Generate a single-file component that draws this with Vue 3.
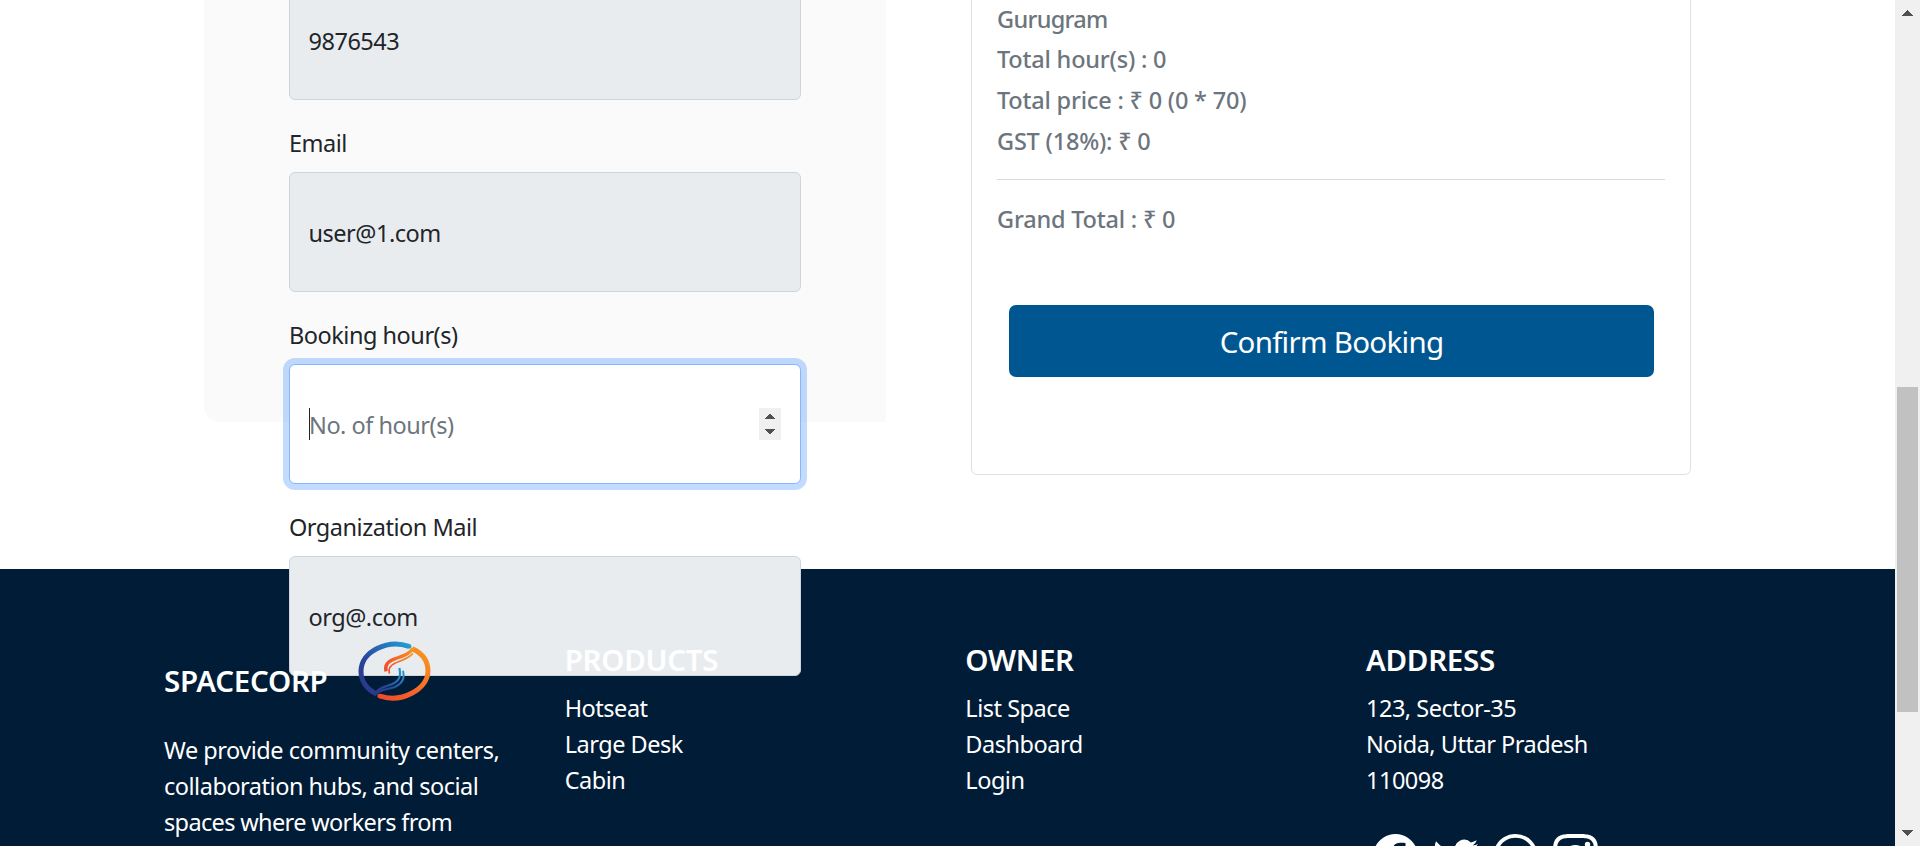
<script setup>
const fields = [
  { label: 'Email', value: 'user@1.com' },
  { label: 'Booking hour(s)', placeholder: 'No. of hour(s)', focused: true },
  { label: 'Organization Mail', value: 'org@.com' },
]

const summary = ['Gurugram', 'Total hour(s) : 0', 'Total price : ₹ 0 (0 * 70)', 'GST (18%): ₹ 0']

const columns = [
  { title: 'PRODUCTS', items: ['Hotseat', 'Large Desk', 'Cabin'] },
  { title: 'OWNER', items: ['List Space', 'Dashboard', 'Login'] },
  { title: 'ADDRESS', items: ['123, Sector-35', 'Noida, Uttar Pradesh', '110098'], social: true },
]

const icons = [
  'M16 8.049c0-4.446-3.582-8.05-8-8.05C3.58 0-.002 3.603-.002 8.05c0 4.017 2.926 7.347 6.75 7.951v-5.625h-2.03V8.05H6.75V6.275c0-2.017 1.195-3.131 3.022-3.131.876 0 1.791.157 1.791.157v1.98h-1.009c-.993 0-1.303.621-1.303 1.258v1.51h2.218l-.354 2.326H9.25V16c3.824-.604 6.75-3.934 6.75-7.951z',
  'M5.026 15c6.038 0 9.341-5.003 9.341-9.334 0-.14 0-.282-.006-.422A6.685 6.685 0 0 0 16 3.542a6.658 6.658 0 0 1-1.889.518 3.301 3.301 0 0 0 1.447-1.817 6.533 6.533 0 0 1-2.087.793A3.286 3.286 0 0 0 7.875 6.03a9.325 9.325 0 0 1-6.767-3.429 3.289 3.289 0 0 0 1.018 4.382A3.323 3.323 0 0 1 .64 6.575v.045a3.288 3.288 0 0 0 2.632 3.218 3.203 3.203 0 0 1-.865.115 3.23 3.23 0 0 1-.614-.057 3.283 3.283 0 0 0 3.067 2.277A6.588 6.588 0 0 1 .78 13.58a6.32 6.32 0 0 1-.78-.045A9.344 9.344 0 0 0 5.026 15z',
  'M13.601 2.326A7.854 7.854 0 0 0 7.994 0C3.627 0 .068 3.558.064 7.926c0 1.399.366 2.76 1.057 3.965L0 16l4.204-1.102a7.933 7.933 0 0 0 3.79.965h.004c4.368 0 7.926-3.558 7.93-7.93A7.898 7.898 0 0 0 13.6 2.326zM7.994 14.521a6.573 6.573 0 0 1-3.356-.92l-.24-.144-2.494.654.666-2.433-.156-.251a6.56 6.56 0 0 1-1.007-3.505c0-3.626 2.957-6.584 6.591-6.584a6.56 6.56 0 0 1 4.66 1.931 6.557 6.557 0 0 1 1.928 4.66c-.004 3.639-2.961 6.592-6.592 6.592z',
  'M8 0C5.829 0 5.556.01 4.703.048 3.85.088 3.269.222 2.76.42a3.917 3.917 0 0 0-1.417.923A3.927 3.927 0 0 0 .42 2.76C.222 3.268.087 3.85.048 4.7.01 5.555 0 5.827 0 8.001c0 2.172.01 2.444.048 3.297.04.852.174 1.433.372 1.942.205.526.478.972.923 1.417.444.445.89.719 1.416.923.51.198 1.09.333 1.942.372C5.555 15.99 5.827 16 8 16s2.444-.01 3.298-.048c.851-.04 1.434-.174 1.943-.372a3.916 3.916 0 0 0 1.416-.923c.445-.445.718-.891.923-1.417.197-.509.332-1.09.372-1.942C15.99 10.445 16 10.173 16 8s-.01-2.445-.048-3.299c-.04-.851-.175-1.433-.372-1.941a3.926 3.926 0 0 0-.923-1.417A3.911 3.911 0 0 0 13.24.42c-.51-.198-1.092-.333-1.943-.372C10.443.01 10.172 0 7.998 0h.003zm-.717 1.442h.718c2.136 0 2.389.007 3.232.046.78.035 1.204.166 1.486.275.373.145.64.319.92.599.28.28.453.546.598.92.11.281.24.705.275 1.485.039.843.047 1.096.047 3.231s-.008 2.389-.047 3.232c-.035.78-.166 1.203-.275 1.485a2.47 2.47 0 0 1-.599.919c-.28.28-.546.453-.92.598-.28.11-.704.24-1.485.276-.843.038-1.096.047-3.232.047s-2.39-.009-3.233-.047c-.78-.036-1.203-.166-1.485-.276a2.478 2.478 0 0 1-.92-.598 2.48 2.48 0 0 1-.6-.92c-.109-.281-.24-.705-.275-1.485-.038-.843-.046-1.096-.046-3.233 0-2.136.008-2.388.046-3.231.036-.78.166-1.204.276-1.486.145-.373.319-.64.599-.92.28-.28.546-.453.92-.598.282-.11.705-.24 1.485-.276.738-.034 1.024-.044 2.515-.045v.002zm4.988 1.328a.96.96 0 1 0 0 1.92.96.96 0 0 0 0-1.92zM8 3.892a4.109 4.109 0 1 0 0 8.217 4.109 4.109 0 0 0 0-8.217zm0 1.441a2.667 2.667 0 1 1 0 5.334 2.667 2.667 0 0 1 0-5.334z',
]
</script>

<template>
  <div class="window">
    <div class="page">
      <main class="booking">
        <form class="panel" @submit.prevent>
          <div class="control">9876543</div>
          <div v-for="f in fields" :key="f.label" class="field">
            <label>{{ f.label }}</label>
            <div class="control" :class="{ focused: f.focused }">
              <template v-if="f.focused">
                <span class="hint">{{ f.placeholder }}</span>
                <svg class="spinner" viewBox="0 0 22 32">
                  <path d="M6 11h10v-1h-1v-1h-1v-1h-1v-1h-1v-1h-2v1h-1v1h-1v1h-1v1h-1zM6 21h10v1h-1v1h-1v1h-1v1h-1v1h-2v-1h-1v-1h-1v-1h-1v-1h-1z" />
                </svg>
              </template>
              <template v-else>{{ f.value }}</template>
            </div>
          </div>
        </form>

        <section class="card">
          <p v-for="line in summary" :key="line">{{ line }}</p>
          <hr />
          <p class="grand">Grand Total : ₹ 0</p>
          <button type="button">Confirm Booking</button>
        </section>
      </main>

      <footer class="footer">
        <div class="cols">
          <div class="col about">
            <div class="brand">
              <h5>SPACECORP</h5>
              <svg class="logo" viewBox="50 30 230 190" fill="none">
                <defs>
                  <linearGradient id="cool" x1="0" y1="1" x2="1" y2="0">
                    <stop offset="0" stop-color="#2b3487" />
                    <stop offset=".4" stop-color="#26489c" />
                    <stop offset="1" stop-color="#259bd6" />
                  </linearGradient>
                  <linearGradient id="warm" x1="0" y1="1" x2="1" y2="0">
                    <stop offset="0" stop-color="#f04a2b" />
                    <stop offset=".4" stop-color="#f4632a" />
                    <stop offset="1" stop-color="#f69a20" />
                  </linearGradient>
                </defs>
                <path d="M209 49C146 27 65 63 65 124C65 153 82 178 112 192" stroke="url(#cool)" stroke-width="15" />
                <circle cx="209" cy="49" r="7" fill="#259bd6" />
                <path d="M219 56C250 70 266 95 266 123C266 176 188 221 121 198" stroke="url(#warm)" stroke-width="15" />
                <circle cx="121" cy="198" r="7" fill="#f04a2b" />
                <path d="M221 54C213 72 190 78 168 86C145 95 136 104 140 124" stroke="url(#warm)" stroke-width="10" />
                <path d="M221 70C207 86 184 92 168 99C152 106 146 115 150 131" stroke="url(#warm)" stroke-width="5" />
                <path d="M108 190C117 172 138 171 157 163C178 154 187 141 180 114" stroke="url(#cool)" stroke-width="7" />
                <path d="M108 195C122 176 145 180 166 171C190 160 197 144 191 122" stroke="url(#cool)" stroke-width="6" />
              </svg>
            </div>
            <p>
              <span>We provide community centers,</span><br />
              <span>collaboration hubs, and social</span><br />
              <span class="tight">spaces where workers from</span>
            </p>
          </div>
          <div v-for="c in columns" :key="c.title" class="col">
            <h5>{{ c.title }}</h5>
            <ul>
              <li v-for="i in c.items" :key="i">{{ i }}</li>
            </ul>
            <div v-if="c.social" class="social">
              <svg v-for="d in icons" :key="d" viewBox="0 0 16 16"><path :d="d" /></svg>
            </div>
          </div>
        </div>
      </footer>
    </div>

    <div class="scrollbar">
      <svg class="up" viewBox="0 0 11 6"><path d="M0 6V5h1V4h1V3h1V2h1V1h1V0h1v1h1v1h1v1h1v1h1v1h1v1z" /></svg>
      <div class="thumb"></div>
      <svg class="down" viewBox="0 0 11 6"><path d="M0 0v1h1v1h1v1h1v1h1v1h1v1h1V5h1V4h1V3h1V2h1V1h1V0z" /></svg>
    </div>
  </div>
</template>

<style>
body {
  overflow: hidden;
}
</style>

<style scoped>
.window {
  display: grid;
  grid-template-columns: 1fr 25px;
  height: 846px;
  overflow: hidden;
  background: #fff;
  color: #212529;
  font: 400 23.5px/36px "Noto Sans", "Open Sans", sans-serif;
  letter-spacing: -0.48px;
  white-space: nowrap;
}
.window * {
  box-sizing: border-box;
}
.page {
  display: flex;
  flex-direction: column;
  height: 846px;
  overflow: hidden;
}
p,
h5,
ul {
  margin: 0;
  padding: 0;
  list-style: none;
}

/* Booking form */
.booking {
  display: flex;
  align-items: flex-start;
  flex: none;
  height: 569px;
  padding-left: 204px;
}
.panel {
  position: relative;
  z-index: 1;
  flex: none;
  width: 682px;
  height: 442px;
  margin-top: -20px;
  padding: 0 85px;
  border-radius: 0 0 0 16px;
  background: #fafafa;
}
.field label {
  display: block;
  margin: 25px 0 11px;
}
.control {
  display: flex;
  justify-content: space-between;
  width: 512px;
  height: 120px;
  padding: 42px 19px 0 18.5px;
  border: 1px solid #ced4da;
  border-radius: 6px;
  background: #e9ecef;
}
.control.focused {
  border-color: #86b7fe;
  background: #fff;
  box-shadow: 0 0 0 6px rgba(13, 110, 253, 0.25);
}
.hint {
  height: 32px;
  margin: 1px 0 0 0.5px;
  border-left: 1px solid #212529;
  color: #6c757d;
  line-height: 34px;
  text-indent: -1px;
}
.spinner {
  width: 22px;
  height: 32px;
  margin: 1px 0 0;
  background: #f0f0f0;
  fill: #505050;
}

/* Price summary */
.card {
  flex: none;
  width: 720px;
  height: 495px;
  margin: -20px 0 0 85px;
  padding: 17.6px 25px 0;
  border: 1px solid #dfdfdf;
  border-radius: 6px;
  color: #6c757d;
  font-weight: 500;
  line-height: 40.8px;
  letter-spacing: -0.2px;
}
.card p:first-child {
  letter-spacing: -0.7px;
}
.card hr {
  height: 1px;
  margin: 17.2px 0 19px;
  border: 0;
  background: #d9dcde;
}
.card button {
  display: block;
  width: 645px;
  height: 72px;
  margin: 65.2px 0 0 12px;
  padding: 1px 0 0;
  border: 0;
  border-radius: 7px;
  background: #005691;
  color: #fff;
  font: 400 29.5px/45px "Noto Sans", "Open Sans", sans-serif;
  letter-spacing: -0.72px;
}

/* Footer */
.footer {
  flex: 1;
  padding: 73px 0 0 164px;
  background: #001c37;
  color: #fff;
}
.cols {
  position: relative;
  z-index: 2;
  display: flex;
}
.col {
  flex: none;
  width: 400.67px;
}
.col h5 {
  margin-bottom: 12px;
  font-size: 29.5px;
  font-weight: 600;
  line-height: 36px;
  letter-spacing: -0.28px;
}
.brand {
  display: flex;
  height: 90px;
}
.brand h5 {
  width: 192.4px;
  padding-top: 21px;
}
.logo {
  width: 76.67px;
  height: 63.33px;
  margin-top: -2px;
}
.tight {
  letter-spacing: -0.65px;
}
.social {
  display: flex;
  gap: 15px;
  margin: 36px 0 0 7.5px;
}
.social svg {
  width: 45px;
  height: 45px;
  fill: #fff;
}

/* Page scrollbar */
.scrollbar {
  display: flex;
  flex-direction: column;
  padding: 10px 2px;
  background: #f0f0f0;
}
.scrollbar svg {
  width: 11px;
  height: 6px;
  margin-left: 5px;
  fill: #505050;
}
.thumb {
  width: 21px;
  height: 325px;
  margin: 371px 0 118px;
  background: #c1c1c1;
}
</style>
